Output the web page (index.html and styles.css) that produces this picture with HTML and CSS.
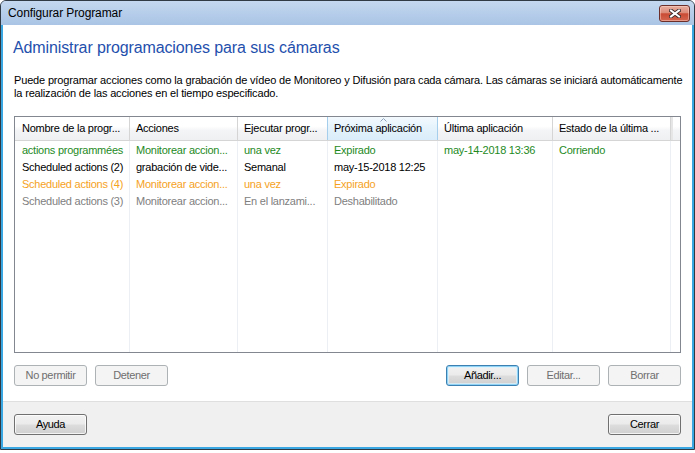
FILE: index.html
```html
<!DOCTYPE html>
<html lang="es">
<head>
<meta charset="utf-8">
<title>Configurar Programar</title>
<link rel="stylesheet" href="styles.css">
</head>
<body>
<div class="window">
  <div class="titlebar">
    <span class="title">Configurar Programar</span>
    <button class="close" aria-label="Cerrar">
      <svg width="12" height="9" viewBox="0 0 12 9">
        <path d="M2 1.5 L10 7.5 M10 1.5 L2 7.5" stroke="#3a2a2a" stroke-width="3.8" stroke-linecap="square" fill="none"/>
        <path d="M2 1.5 L10 7.5 M10 1.5 L2 7.5" stroke="#ffffff" stroke-width="2" stroke-linecap="square" fill="none"/>
      </svg>
    </button>
  </div>
  <div class="client">
    <div class="main">
      <h1 class="heading">Administrar programaciones para sus cámaras</h1>
      <p class="desc">Puede programar acciones como la grabación de vídeo de Monitoreo y Difusión para cada cámara. Las cámaras se iniciará automáticamente<br>la realización de las acciones en el tiempo especificado.</p>
      <div class="list">
        <div class="lhead">
          <div class="hcell first">Nombre de la progr...</div>
          <div class="hcell">Acciones</div>
          <div class="hcell">Ejecutar progr...</div>
          <div class="hcell sorted"><svg class="sort" width="7" height="4" viewBox="0 0 7 4"><path d="M0.5 3.5 L3.5 0.5 L6.5 3.5" stroke="#8fa4bb" stroke-width="1" fill="none"/></svg>Próxima aplicación</div>
          <div class="hcell">Última aplicación</div>
          <div class="hcell">Estado de la última ...</div>
          <div class="hcell last"></div>
        </div>
        <div class="lbody">
          <div class="col first">
            <div class="cell green">actions programmées</div>
            <div class="cell">Scheduled actions (2)</div>
            <div class="cell orange">Scheduled actions (4)</div>
            <div class="cell gray">Scheduled actions (3)</div>
          </div>
          <div class="col">
            <div class="cell green">Monitorear accion...</div>
            <div class="cell">grabación de vide...</div>
            <div class="cell orange">Monitorear accion...</div>
            <div class="cell gray">Monitorear accion...</div>
          </div>
          <div class="col">
            <div class="cell green">una vez</div>
            <div class="cell">Semanal</div>
            <div class="cell orange">una vez</div>
            <div class="cell gray">En el lanzami...</div>
          </div>
          <div class="col">
            <div class="cell green">Expirado</div>
            <div class="cell">may-15-2018 12:25</div>
            <div class="cell orange">Expirado</div>
            <div class="cell gray">Deshabilitado</div>
          </div>
          <div class="col">
            <div class="cell green">may-14-2018 13:36</div>
          </div>
          <div class="col">
            <div class="cell green">Corriendo</div>
          </div>
          <div class="col last"></div>
        </div>
      </div>
      <div class="btnrow">
        <div class="group">
          <button class="btn" disabled>No permitir</button>
          <button class="btn" disabled>Detener</button>
        </div>
        <div class="group">
          <button class="btn default">Añadir...</button>
          <button class="btn" disabled>Editar...</button>
          <button class="btn" disabled>Borrar</button>
        </div>
      </div>
    </div>
    <div class="footer">
      <button class="btn">Ayuda</button>
      <button class="btn">Cerrar</button>
    </div>
  </div>
</div>
</body>
</html>
```

FILE: styles.css
```css
* { box-sizing: border-box; }
html, body { margin: 0; padding: 0; background: #ffffff; }
body {
  font-family: "Liberation Sans", Arial, sans-serif;
  font-size: 11px;
  color: #000;
}
.window {
  width: 695px;
  height: 450px;
  display: flex;
  flex-direction: column;
  border: 1px solid #2f3a45;
  border-radius: 6px 6px 0 0;
  overflow: hidden;
  background: #b7cde8;
}
.titlebar {
  height: 24px;
  flex: none;
  display: flex;
  align-items: flex-start;
  justify-content: space-between;
  padding: 0 4px 0 7px;
  background: linear-gradient(#c4d8ef, #a9c4e5);
}
.title {
  margin-top: 4px;
  line-height: 16px;
  font-size: 12px;
  letter-spacing: -0.1px;
  color: #000;
}
.close {
  margin-top: 4px;
  width: 31px;
  height: 17px;
  padding: 0;
  border: 1px solid #6d2f2a;
  border-radius: 3px;
  background: linear-gradient(#e9ae9f 0%, #dd8a78 45%, #c94b35 52%, #d4664f 100%);
  box-shadow: inset 0 0 0 1px rgba(255, 220, 210, 0.45);
  display: flex;
  align-items: center;
  justify-content: center;
}
.client {
  flex: 1;
  display: flex;
  flex-direction: column;
  border: solid #3aa6e2;
  border-width: 0 2px 2px 2px;
}
.main {
  flex: 1;
  background: #ffffff;
  padding: 0 11px;
  display: flex;
  flex-direction: column;
}
.heading {
  margin: 13px 0 0 -1px;
  font-size: 16px;
  line-height: 20px;
  letter-spacing: -0.12px;
  font-weight: normal;
  color: #1f50ad;
  white-space: nowrap;
}
.desc {
  margin: 16px 0 0;
  font-size: 11px;
  line-height: 13px;
  letter-spacing: -0.16px;
  white-space: nowrap;
}
.list {
  margin-top: 16px;
  height: 237px;
  border: 1px solid #828790;
  display: flex;
  flex-direction: column;
  background: #fff;
  letter-spacing: -0.25px;
}
.lhead, .lbody {
  display: grid;
  grid-template-columns: 115px 108px 90px 110px 115px 118px 1fr;
}
.lhead {
  height: 24px;
  flex: none;
  border-bottom: 1px solid #d5d5d5;
  background: linear-gradient(#ffffff 0%, #ffffff 40%, #f3f4f6 60%, #eff0f2 100%);
}
.hcell {
  position: relative;
  padding-left: 6px;
  line-height: 23px;
  border-right: 1px solid #d5d5d5;
  white-space: nowrap;
  overflow: hidden;
}
.hcell.first { padding-left: 7px; }
.hcell.last { border-right: none; box-shadow: inset 2px 0 0 #e6e6e6; }
.hcell.sorted {
  background: linear-gradient(#f4fafe 0%, #e5f3fc 45%, #d9edfa 100%);
  border-right-color: #a5cdec;
  box-shadow: -1px 0 0 #a5cdec;
}
.sort {
  position: absolute;
  top: 1px;
  left: 50%;
  margin-left: -3px;
}
.lbody { flex: 1; }
.col {
  padding-top: 1px;
  border-right: 1px solid #eceff4;
}
.col.last { border-right: none; }
.cell {
  height: 17px;
  line-height: 17px;
  padding-left: 6px;
  white-space: nowrap;
  overflow: hidden;
}
.col.first .cell { padding-left: 7px; }
.green { color: #1e8a1e; }
.orange { color: #f5a21e; }
.gray { color: #808080; }
.btnrow {
  margin-top: 12px;
  display: flex;
  justify-content: space-between;
}
.group {
  display: flex;
  gap: 8px;
}
.btn {
  width: 73px;
  height: 21px;
  padding: 0;
  font-family: "Liberation Sans", Arial, sans-serif;
  font-size: 11px;
  letter-spacing: -0.35px;
  line-height: 19px;
  color: #000;
  border: 1px solid #707070;
  border-radius: 3px;
  background: linear-gradient(#f2f2f2 0%, #ebebeb 48%, #dddddd 52%, #cfcfcf 100%);
  box-shadow: inset 0 0 0 1px rgba(255, 255, 255, 0.75);
}
.btn:disabled {
  border-color: #adb2b5;
  background: #f4f4f4;
  color: #6f6f6f;
  box-shadow: none;
}
.btn.default {
  border-color: #3c7fb1;
  box-shadow: inset 0 0 0 1px #8fd3f7, inset 0 0 0 2px rgba(220, 242, 253, 0.7);
}
.footer {
  height: 46px;
  flex: none;
  background: #f0f0f0;
  border-top: 1px solid #dfdfdf;
  padding: 12px 11px 0;
  display: flex;
  justify-content: space-between;
  align-items: flex-start;
}
```
